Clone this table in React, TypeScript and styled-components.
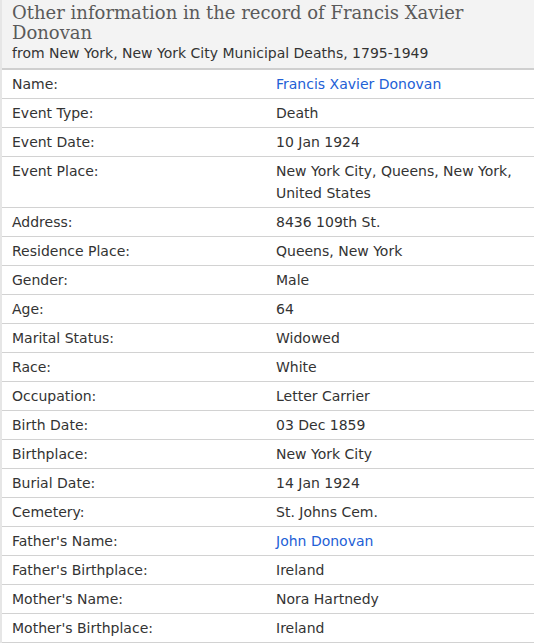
import React from "react";
import styled, { createGlobalStyle } from "styled-components";

const Global = createGlobalStyle`
  html, body { margin: 0; padding: 0; background: #fff; }
  body { font-family: "DejaVu Sans", "Open Sans", sans-serif; }
`;

const Panel = styled.div`
  width: 534px;
  border-left: 2px solid #e6e6e6;
  box-sizing: border-box;
`;

const Header = styled.div`
  background: #f3f3f3;
  padding: 3px 10px 5px 10px;
  border-bottom: 2px solid #cfcfcf;
`;

const Title = styled.h2`
  margin: 0;
  font-family: "DejaVu Serif", serif;
  font-weight: normal;
  font-size: 18px;
  line-height: 20px;
  color: #5a5a5a;
`;

const Subtitle = styled.div`
  font-size: 14px;
  line-height: 20px;
  color: #333;
  white-space: nowrap;
`;

const Row = styled.div`
  display: grid;
  grid-template-columns: 264px 1fr;
  border-bottom: 1px solid #d2d2d2;
`;

const Cell = styled.div`
  padding: 3px 10px;
  font-size: 14px;
  line-height: 22px;
  color: #333;
`;

const Link = styled.a`
  color: #2360d6;
  text-decoration: none;
`;

type Item = { label: string; value: string; link?: boolean };

const items: Item[] = [
  { label: "Name:", value: "Francis Xavier Donovan", link: true },
  { label: "Event Type:", value: "Death" },
  { label: "Event Date:", value: "10 Jan 1924" },
  { label: "Event Place:", value: "New York City, Queens, New York, United States" },
  { label: "Address:", value: "8436 109th St." },
  { label: "Residence Place:", value: "Queens, New York" },
  { label: "Gender:", value: "Male" },
  { label: "Age:", value: "64" },
  { label: "Marital Status:", value: "Widowed" },
  { label: "Race:", value: "White" },
  { label: "Occupation:", value: "Letter Carrier" },
  { label: "Birth Date:", value: "03 Dec 1859" },
  { label: "Birthplace:", value: "New York City" },
  { label: "Burial Date:", value: "14 Jan 1924" },
  { label: "Cemetery:", value: "St. Johns Cem." },
  { label: "Father's Name:", value: "John Donovan", link: true },
  { label: "Father's Birthplace:", value: "Ireland" },
  { label: "Mother's Name:", value: "Nora Hartnedy" },
  { label: "Mother's Birthplace:", value: "Ireland" },
];

export default function App() {
  return (
    <>
      <Global />
      <Panel>
        <Header>
          <Title>Other information in the record of Francis Xavier Donovan</Title>
          <Subtitle>from New York, New York City Municipal Deaths, 1795-1949</Subtitle>
        </Header>
        {items.map((it) => (
          <Row key={it.label}>
            <Cell>{it.label}</Cell>
            <Cell>{it.link ? <Link href="#">{it.value}</Link> : it.value}</Cell>
          </Row>
        ))}
      </Panel>
    </>
  );
}
